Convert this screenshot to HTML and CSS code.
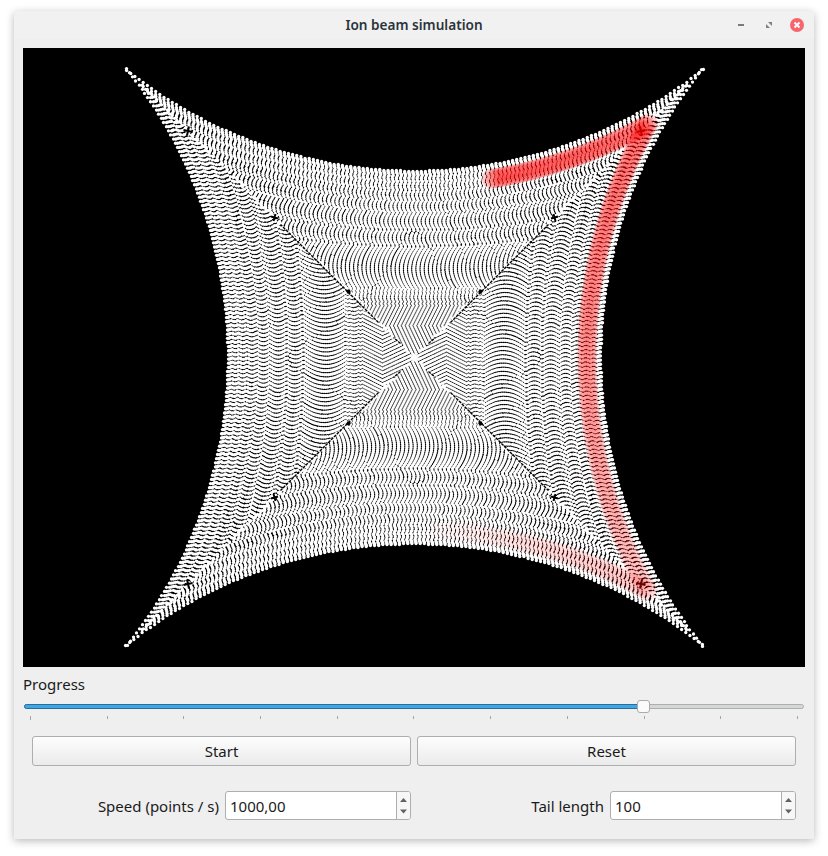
FILE: index.html
```html
<!DOCTYPE html>
<html lang="en">
<head>
<meta charset="utf-8">
<title>Ion beam simulation</title>
<link rel="stylesheet" href="styles.css">
</head>
<body>
<div class="window">
  <header class="titlebar">
    <span class="title">Ion beam simulation</span>
    <div class="controls">
      <svg width="14" height="14" viewBox="0 0 14 14"><path d="M4 7h6" stroke="#777b7b" stroke-width="2"/></svg>
      <svg width="14" height="14" viewBox="0 0 14 14"><path d="M6 4h4v4zM4 6v4h4z" fill="#7b8080"/></svg>
      <svg width="14" height="14" viewBox="0 0 14 14"><circle cx="7" cy="7" r="7" fill="#f7646b"/><path d="M4.500 4.500l5 5M9.500 4.500l-5 5" stroke="#fff" stroke-width="2"/></svg>
    </div>
  </header>
  <main class="content">
    <canvas id="beam" class="beam" width="782" height="619"></canvas>
    <div class="label">Progress</div>
    <div class="slider">
      <div class="track"><div class="fill"></div><div class="handle"></div></div>
      <div class="ticks"><i></i><i></i><i></i><i></i><i></i><i></i><i></i><i></i><i></i><i></i><i></i></div>
    </div>
    <div class="grid">
      <button class="button">Start</button>
      <button class="button">Reset</button>
      <div class="field"><span>Speed (points / s)</span>
        <div class="spin"><span class="value">1000,00</span><svg width="13" height="27" viewBox="0 0 13 27"><path d="M3 10h7L6.500 6zM3 17.500h7L6.500 21.500z" fill="#606264"/></svg></div></div>
      <div class="field"><span>Tail length</span>
        <div class="spin"><span class="value">100</span><svg width="13" height="27" viewBox="0 0 13 27"><path d="M3 10h7L6.500 6zM3 17.500h7L6.500 21.500z" fill="#606264"/></svg></div></div>
    </div>
  </main>
</div>
<script src="beam.js"></script>
</body>
</html>
```
FILE: styles.css
```css
* { box-sizing: border-box; }
body { margin: 0; background: #fff; padding: 11px 14px 17px; font: 15px/20px "Noto Sans", sans-serif; color: #1a1a1a; }
.window { width: 800px; height: 828px; background: #efefef; border-radius: 3px 3px 0 0; box-shadow: 0 2px 9px rgba(0,0,0,.28); }
.titlebar { height: 28px; background: #f1f1f1; border-radius: 3px 3px 0 0; display: grid; grid-template-columns: 1fr auto 1fr; align-items: center; }
.title { grid-column: 2; font-size: 13.6px; font-weight: 600; color: #2c343a; }
.controls { display: flex; gap: 14px; justify-content: flex-end; padding-right: 10px; }
.content { padding: 9px 9px 0; }
.beam { display: block; background: #000; }
.label { height: 21px; margin-top: 7px; }
.slider { height: 41px; padding: 9px 1px 0; }
.track { height: 5px; border: 1px solid #acaeaf; border-radius: 3px; background: #d5d6d6; position: relative; }
.fill { position: absolute; left: -1px; top: -1px; width: 616px; height: 5px; border: 1px solid #276f9c; border-radius: 3px; background: #42a5e4; }
.handle { position: absolute; left: 612px; top: -5px; width: 13px; height: 13px; border: 1px solid #a9abac; border-radius: 3px; background: #fbfbfb; }
.ticks { display: flex; justify-content: space-between; padding: 7px 6px 0; }
.ticks i { width: 1px; height: 3px; background: #a5a6a7; }
.ticks i:first-child { height: 4px; }
.grid { display: grid; grid-template-columns: 379px 379px; gap: 25px 6px; padding: 0 9px; }
.button { height: 30px; border: 1px solid #acaeaf; border-radius: 3px; background: linear-gradient(#fdfdfd, #ebebeb); font: inherit; color: inherit; padding: 0; }
.field { display: flex; align-items: center; justify-content: flex-end; gap: 6px; height: 29px; }
.spin { width: 186px; height: 29px; border: 1px solid #acaeaf; border-radius: 3px; background: #fff; display: flex; justify-content: space-between; align-items: center; overflow: hidden; }
.value { padding-left: 4px; }
.spin svg { background: #f7f7f7; border-left: 1px solid #acaeaf; width: 14px; }
```
FILE: beam.js
```js
const ctx = document.getElementById('beam').getContext('2d');
ctx.translate(391.5, 309.5);

// Deflection of the beam grows with the distance from the axis.
function gain(q) {
  const s = Math.sqrt(Math.max(0, 2 - q));
  return 289 - 114 * s + 12 * s * s * s;
}

// Distance from the axis along a turn with middle m and corner c.
function bow(m, c, b) {
  const sag = c - m;
  if (sag < 0.3) return m;
  const R = (c * c + sag * sag) / (2 * sag);
  return m + R - Math.sqrt(R * R - b * b);
}

// Radii at which the sampling phase of neighbouring turns folds over.
const FOLDS = [190, 183, 176, 168, 158, 145, 128, 112, 67, 55];

function phase(m) {
  for (let i = 1; i < FOLDS.length; i++) {
    if (m >= FOLDS[i]) {
      const half = (FOLDS[i - 1] - FOLDS[i]) / 2;
      const t = (m - FOLDS[i] - half) / half;
      return Math.min(9, half * 0.45) * (1 - t * t);
    }
  }
  return (55 - m) * 0.5;
}

ctx.fillStyle = '#fff';
let last = 999, turn = 0;
for (let s = 1; s > 0.005; s -= 0.0002) {
  const m = s * gain(s * s);
  const c = s * gain(2 * s * s);
  const spacing = m > 183 ? 1 : m > 165 ? 1.5 : 2;
  if (last - m < spacing && c > 1) continue;
  last = m;
  turn++;
  const pitch = m > 70 ? 4.15 : 3.9;
  const folded = m < 34 || Math.abs(m - 67) < 2.2 || Math.abs(m - 55) < 2.2;
  const shift = phase(m) + (folded && turn % 2 ? pitch / 2 : 0);
  for (let side = 0; side < 4; side++) {
    ctx.save();
    ctx.rotate(side * Math.PI / 2);
    const edge = m > 183 ? c : c + 1.2;
    const first = Math.ceil((-edge - shift) / pitch);
    for (let k = first; k * pitch + shift <= edge; k++) {
      const b = k * pitch + shift;
      ctx.beginPath();
      ctx.arc(-Math.round(bow(m, c, b) - 0.7), b, m > 165 ? 1.65 : m > 60 ? 1.7 : 1.6, 0, 7);
      ctx.fill();
    }
    ctx.restore();
  }
}

ctx.strokeStyle = '#000';
for (const [sx, sy] of [[-1, -1], [1, -1], [-1, 1], [1, 1]]) {
  ctx.save();
  ctx.scale(sx, sy);
  ctx.lineWidth = 1.4;
  ctx.setLineDash([3, 1]);
  ctx.beginPath();
  ctx.moveTo(36, 35);
  ctx.lineTo(134, 133);
  ctx.moveTo(14, 14);
  ctx.lineTo(21, 20);
  ctx.stroke();
  ctx.setLineDash([]);
  ctx.lineWidth = 2;
  for (const p of [66, 140, 226.5]) {
    const r = p > 200 ? 4.5 : p > 100 ? 3.5 : 2;
    ctx.beginPath();
    ctx.moveTo(p - r, p - 1); ctx.lineTo(p + r, p + 1);
    ctx.moveTo(p + 1, p - r); ctx.lineTo(p - 1, p + r);
    ctx.stroke();
  }
  ctx.restore();
}

// Fading tail behind the current position of the beam.
const M = 172.5, C = 233.5;
const tail = [];
for (let b = 0; b < C; b += 4) tail.push([b, bow(M, C, b)]);
for (let b = C; b > -C; b -= 4) tail.push([bow(M, C, b), b]);
for (let b = C; b > 76; b -= 4) tail.push([b, -bow(M, C, b)]);
tail.forEach(([px, py], i) => {
  ctx.fillStyle = `rgba(255,0,0,${0.21 * i / tail.length})`;
  ctx.beginPath();
  ctx.arc(px, py, 10, 0, 7);
  ctx.fill();
});
```
